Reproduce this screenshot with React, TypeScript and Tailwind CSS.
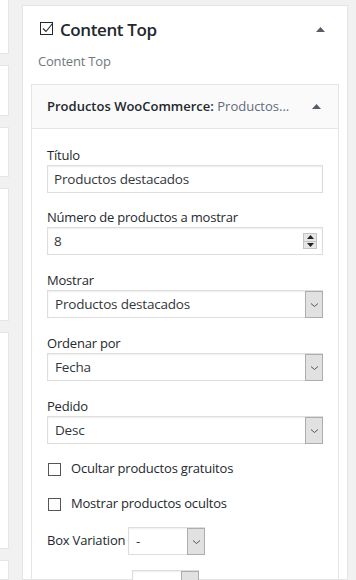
import React from 'react';

const leftBoxes = ['h-[54px] border-t-0', 'h-[51px]', 'h-[50px]', 'h-[133px]', 'h-[217px]', 'flex-1'];

function Caret() {
  return (
    <svg width="9" height="5" viewBox="0 0 9 5" className="shrink-0">
      <path d="M0 5 L4.5 0 L9 5 Z" fill="#555d66" />
    </svg>
  );
}

function Chevron() {
  return (
    <svg width="9" height="6" viewBox="0 0 9 6">
      <path d="M1 1.5 L4.5 4.5 L8 1.5" fill="none" stroke="#555" strokeWidth="1" />
    </svg>
  );
}

function Label({ children }: { children: React.ReactNode }) {
  return <label className="block text-[13px] leading-[18px] tracking-[-0.2px]">{children}</label>;
}

function TextInput({ value, spinner = false }: { value: string; spinner?: boolean }) {
  return (
    <div className="mt-[1px] flex h-[28px] items-center border border-[#ddd] bg-white pl-[6px] pr-[5px] text-[13.5px] tracking-[-0.2px] text-[#32373c] shadow-[inset_0_1px_2px_rgba(0,0,0,0.07)]">
      <span className="flex-1">{value}</span>
      {spinner && (
        <div className="flex h-[16px] w-[14px] flex-col border border-[#c4c4c4] bg-[#e6e6e6]">
          <div className="flex flex-1 items-center justify-center border-b border-[#c4c4c4]">
            <svg width="7" height="4" viewBox="0 0 7 4">
              <path d="M0 4 L3.5 0 L7 4 Z" fill="#222" />
            </svg>
          </div>
          <div className="flex flex-1 items-center justify-center">
            <svg width="7" height="4" viewBox="0 0 7 4">
              <path d="M0 0 L3.5 4 L7 0 Z" fill="#222" />
            </svg>
          </div>
        </div>
      )}
    </div>
  );
}

function Select({ value, className = '' }: { value: string; className?: string }) {
  return (
    <div
      className={`flex h-[28px] items-stretch border border-[#ddd] bg-white text-[13.5px] tracking-[-0.2px] text-[#32373c] shadow-[inset_0_1px_2px_rgba(0,0,0,0.07)] ${className}`}
    >
      <span className="flex flex-1 items-center pl-[7px]">{value}</span>
      <span className="-mr-[1px] -mb-[1px] flex w-[18px] items-center justify-center border border-[#adadad] bg-[#e1e1e1]">
        <Chevron />
      </span>
    </div>
  );
}

function Check({ label }: { label: string }) {
  return (
    <div className="flex h-[18px] items-center text-[13px] tracking-[-0.2px]">
      <span className="ml-[1px] h-[13px] w-[13px] border border-[#555] bg-white" />
      <span className="ml-[10px]">{label}</span>
    </div>
  );
}

export default function App() {
  return (
    <div className="flex h-[580px] w-[356px] overflow-hidden bg-[#f1f1f1] text-[#23282d] [font-family:'Open_Sans',sans-serif]">
      {/* side stack */}
      <div className="flex w-[9px] shrink-0 flex-col gap-[11px]">
        {leftBoxes.map((c, i) => (
          <div key={i} className={`border border-l-0 border-[#e5e5e5] bg-white ${c}`} />
        ))}
      </div>

      <section className="ml-[13px] mt-[5px] w-[326px] shrink-0 border border-[#e5e5e5] bg-white">
        <div className="flex h-[46px] items-center pl-[17px] pr-[22px]">
          <svg width="14" height="14" viewBox="0 0 14 14" className="shrink-0">
            <rect x="0.5" y="0.5" width="12" height="12" fill="none" stroke="#23282d" />
            <path d="M3 6.5 L6 9.5 L12.5 1.5" fill="none" stroke="#23282d" strokeWidth="1.1" />
          </svg>
          <h3 className="ml-[6px] flex-1 text-[17px] font-semibold leading-none tracking-[-0.4px]">Content Top</h3>
          <Caret />
        </div>
        <p className="pl-[15px] text-[13px] leading-[18px] tracking-[-0.2px] text-[#72777c]">Content Top</p>

        <div className="mx-[8px] mt-[14px] border border-[#e5e5e5]">
          <div className="flex h-[44px] items-center border-b border-[#e5e5e5] bg-[#fafafa] pl-[15px] pr-[17px] text-[13px] font-semibold">
            <span className="flex-1 whitespace-nowrap">
              Productos WooCommerce: <span className="font-normal text-[#5f6b7a]">Productos...</span>
            </span>
            <Caret />
          </div>

          <div className="px-[15px] pt-[17px] pb-[20px]">
            <Label>Título</Label>
            <TextInput value="Productos destacados" />

            <div className="mt-[15px]">
              <Label>Número de productos a mostrar</Label>
              <TextInput value="8" spinner />
            </div>

            <div className="mt-[16px]">
              <Label>Mostrar</Label>
              <Select value="Productos destacados" className="mt-[1px]" />
            </div>

            <div className="mt-[16px]">
              <Label>Ordenar por</Label>
              <Select value="Fecha" className="mt-[1px]" />
            </div>

            <div className="mt-[16px]">
              <Label>Pedido</Label>
              <Select value="Desc" className="mt-[1px]" />
            </div>

            <div className="mt-[16px]">
              <Check label="Ocultar productos gratuitos" />
            </div>
            <div className="mt-[17px]">
              <Check label="Mostrar productos ocultos" />
            </div>

            <div className="mt-[14px] flex items-center">
              <span className="w-[81px] text-[13px] tracking-[-0.2px]">Box Variation</span>
              <Select value="-" className="w-[77px]" />
            </div>

            <div className="mt-[15px] flex">
              <Select value="" className="ml-[85px] w-[67px]" />
            </div>
          </div>
        </div>
      </section>
    </div>
  );
}
